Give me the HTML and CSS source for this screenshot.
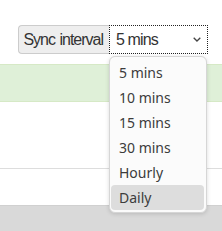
FILE: index.html
```html
<!DOCTYPE html>
<html>
  <head>
    <title>Sync settings</title>
    <meta charset="UTF-8" />
    <link rel="stylesheet" href="styles.css">
  </head>
  <body>
    <div class="toolbar">
      <div class="input-group">
        <span class="group-label">Sync interval</span>
        <div class="group-select">
          <span>5 mins</span>
          <svg class="chevron" width="8" height="5" viewBox="0 0 8 5">
            <path d="M0.7 0.7 L4 4 L7.3 0.7" fill="none" stroke="#444" stroke-width="1.3" />
          </svg>
        </div>
      </div>

      <ul class="dropdown">
        <li>5 mins</li>
        <li>10 mins</li>
        <li>15 mins</li>
        <li>30 mins</li>
        <li>Hourly</li>
        <li class="active">Daily</li>
      </ul>
    </div>

    <div class="alert"></div>
    <div class="section"></div>
    <div class="spacer"></div>
    <div class="footer"></div>
  </body>
</html>
```

FILE: styles.css
```css
body {
  margin: 0;
  font-family: "Liberation Sans", Arial, sans-serif;
  color: #333;
  background-color: white;
}

.toolbar {
  position: relative;
  display: flex;
  justify-content: flex-end;
  padding: 25px 14px 0 0;
}

.input-group {
  display: flex;
  height: 29px;
}

.group-label {
  padding: 0 6px 0 4px;
  background-color: #eeeeee;
  border: 1px solid #cccccc;
  border-right: none;
  border-radius: 4px 0 0 4px;
  line-height: 28px;
  font-size: 16px;
  letter-spacing: -1px;
  word-spacing: 1px;
}

.group-select {
  display: flex;
  align-items: center;
  justify-content: space-between;
  width: 97px;
  padding: 0 5px 0 6px;
  box-sizing: border-box;
  width: 99px;
  background-color: white;
  border: 1px dotted #222;
  font-size: 16px;
  letter-spacing: -0.9px;
}

.chevron {
  margin-right: 1px;
}

.dropdown {
  position: absolute;
  top: 56px;
  left: 109px;
  width: 98px;
  box-sizing: border-box;
  margin: 0;
  padding: 3px 2px 2px 1px;
  list-style: none;
  background-color: #fbfbfb;
  border: 1px solid #d6d6d6;
  border-radius: 6px;
  box-shadow: 0 1px 4px rgba(0, 0, 0, 0.15);
  font-family: "Noto Sans", "Open Sans", sans-serif;
  font-size: 14px;
  color: #3c3c3c;
}

.dropdown li {
  height: 25px;
  line-height: 25px;
  padding-left: 8px;
  border-radius: 4px;
}

.dropdown li.active {
  background-color: #dddddd;
}

.alert {
  margin-top: 10px;
  height: 36px;
  background-color: #dff0d8;
  border-top: 1px solid #d6e9c6;
  border-bottom: 1px solid #d6e9c6;
}

.section {
  height: 66px;
  border-bottom: 1px solid #dddddd;
}

.spacer {
  height: 36px;
}

.footer {
  height: 30px;
  background-color: #d9d9d9;
  border-top: 1px solid #d0d0d0;
}
```
